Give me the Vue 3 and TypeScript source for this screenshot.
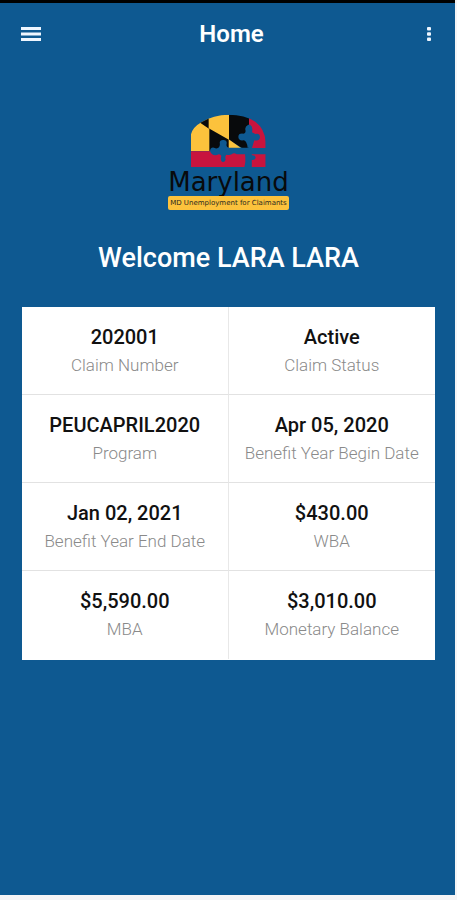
<script setup lang="ts">
interface ClaimField {
  label: string
  value: string
}

const fields: ClaimField[] = [
  { label: 'Claim Number', value: '202001' },
  { label: 'Claim Status', value: 'Active' },
  { label: 'Program', value: 'PEUCAPRIL2020' },
  { label: 'Benefit Year Begin Date', value: 'Apr 05, 2020' },
  { label: 'Benefit Year End Date', value: 'Jan 02, 2021' },
  { label: 'WBA', value: '$430.00' },
  { label: 'MBA', value: '$5,590.00' },
  { label: 'Monetary Balance', value: '$3,010.00' },
]
</script>

<template>
  <div class="screen">
    <header class="bar">
      <button class="icon-button" type="button" aria-label="Menu">
        <svg width="20" height="16" viewBox="0 0 20 16" fill="currentColor">
          <path d="M0 1h20v3H0zM0 6.500h20v3H0zM0 12h20v3H0z" />
        </svg>
      </button>
      <h1>Home</h1>
      <button class="icon-button more" type="button" aria-label="More options">
        <svg width="4" height="16" viewBox="0 0 4 16" fill="currentColor">
          <rect y="1" width="4" height="3.500" rx="1" />
          <rect y="6.200" width="4" height="3.500" rx="1" />
          <rect y="11.400" width="4" height="3.500" rx="1" />
        </svg>
      </button>
    </header>

    <main>
      <div class="logo">
        <svg class="emblem" width="76" height="54" viewBox="107 27 228 162" aria-hidden="true">
          <defs>
            <clipPath id="arch">
              <path d="M107 186V88Q112 67 138 52Q174 29 220 29Q268 29 300 50Q328 71 331 110V186Z" />
            </clipPath>
          </defs>
          <g clip-path="url(#arch)">
            <path fill="#fcc23c" d="M104 27H222V138H104Z" />
            <path fill="#080a0c" d="M130 50L160 32V70L222 105V138H162V72Z" />
            <path fill="#080a0c" d="M221 27H281V129H260L221 105Z" />
            <path fill="#fcc23c" d="M220 103L257 129H220Z" />
            <path fill="#c8143e" d="M281 27H333V129H281ZM104 139H270V189H104ZM288 147H333V189H288Z" />
            <path
              fill="#0e5991"
              d="M279 59Q268 64 270 74Q273 84 264 86Q249 84 249 96Q250 108 264 106Q274 105 277 129H334V148H270Q268 154 275 156Q284 163 275 169Q266 174 268 189H289V165Q299 166 301 158Q300 150 290 151V129L297 106Q313 109 314 96Q313 84 300 87L290 82Q294 64 284 59ZM164 137Q166 126 176 128Q185 133 191 127Q195 120 193 113Q194 104 204 105Q216 106 214 116Q211 127 221 128H280V148H244Q236 141 229 148Q223 151 213 149Q208 154 211 164Q207 174 200 170Q194 165 198 153Q194 145 185 150Q168 153 164 137Z"
            />
          </g>
        </svg>
        <span class="state">Maryland</span>
        <span class="tagline">MD Unemployment for Claimants</span>
      </div>

      <h2>Welcome LARA LARA</h2>

      <dl class="claims">
        <div v-for="field in fields" :key="field.label" class="cell">
          <dt>{{ field.label }}</dt>
          <dd>{{ field.value }}</dd>
        </div>
      </dl>
    </main>
  </div>
</template>

<style>
body {
  background: #f6f5f6;
}
</style>

<style scoped>
.screen {
  box-sizing: border-box;
  min-height: calc(100vh - 5px);
  margin-right: 2px;
  border-top: 3px solid #000;
  background: #0e5991;
  color: #fff;
  font-family: Roboto, "Liberation Sans", sans-serif;
}

.bar {
  display: grid;
  grid-template-columns: 48px 1fr 40px;
  align-items: center;
  height: 62px;
  padding: 0 12px;
}

.icon-button {
  display: flex;
  align-items: center;
  justify-content: flex-start;
  height: 40px;
  padding: 0 0 0 9px;
  border: 0;
  background: none;
  color: #eef6ff;
}

.more {
  justify-content: flex-end;
  padding: 0 12px 0 0;
}

h1,
h2 {
  margin: 0;
  text-align: center;
}

h1 {
  font-size: 24px;
  font-weight: 600;
  line-height: 32px;
}

h2 {
  padding: 32px 0;
  font-size: 27px;
  font-weight: 500;
  line-height: 33px;
}

main {
  padding: 49px 20px 0 22px;
}

.logo {
  display: flex;
  flex-direction: column;
  align-items: center;
}

.emblem {
  display: block;
}

.state {
  color: #080a0c;
  font: 26px/28px "DejaVu Sans", sans-serif;
}

.tagline {
  box-sizing: border-box;
  width: 121px;
  border-radius: 2px;
  background: #fcc23c;
  color: #2b2a20;
  font: 7px/14px "DejaVu Sans", sans-serif;
  text-align: center;
  white-space: nowrap;
}

.claims {
  display: grid;
  grid-template-columns: 1fr 1fr;
  margin: 0;
  padding-bottom: 1px;
  background: #fff;
}

.cell {
  display: flex;
  flex-direction: column-reverse;
  justify-content: flex-end;
  box-sizing: border-box;
  height: 88px;
  padding-top: 17px;
  border-bottom: 1px solid #e2e2e2;
  text-align: center;
}

.cell:nth-child(odd) {
  border-right: 1px solid #e8e8e8;
}

.cell:nth-last-child(-n + 2) {
  border-bottom: 0;
}

dt {
  color: #8a8a8a;
  font-size: 17px;
  font-weight: 300;
  line-height: 28px;
}

dd {
  margin: 0;
  color: #111;
  font-size: 20px;
  font-weight: 500;
  line-height: 27px;
}
</style>
